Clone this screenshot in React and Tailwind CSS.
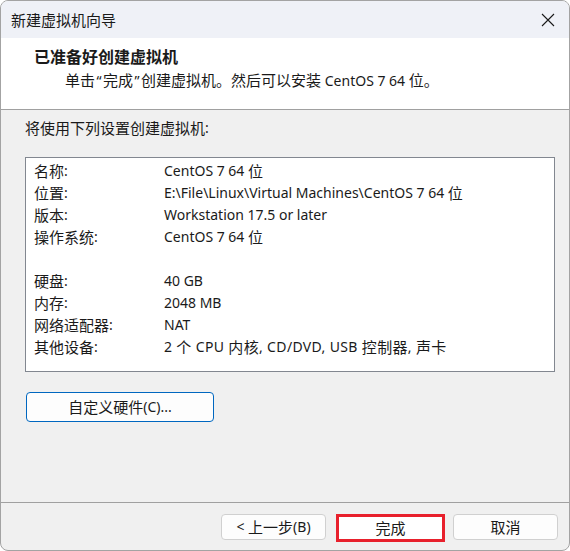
import React from "react";

// CJK runs are drawn a touch larger than the Latin text, as in the original dialog
const CJK = /([\u3000-\u303f\u4e00-\u9fff\uff00-\uffef]+|[“”])/;

const Mixed = ({ text }) => (
  <span>
    {text.split(CJK).map((part, i) => {
      if (!part) return null;
      if (part === "“" || part === "”") {
        return (
          <span key={i} className="inline-block align-top px-[1.5px]">
            {part}
          </span>
        );
      }
      if (CJK.test(part)) {
        return (
          <span key={i} className="text-[15px] align-top">
            {part}
          </span>
        );
      }
      return (
        <span key={i} className="align-top whitespace-pre">
          {part}
        </span>
      );
    })}
  </span>
);

const rows = [
  ["名称:", "CentOS 7 64 位"],
  ["位置:", "E:\\File\\Linux\\Virtual Machines\\CentOS 7 64 位"],
  ["版本:", "Workstation 17.5 or later"],
  ["操作系统:", "CentOS 7 64 位"],
  ["", ""],
  ["硬盘:", "40 GB"],
  ["内存:", "2048 MB"],
  ["网络适配器:", "NAT"],
  ["其他设备:", "2 个 CPU 内核, CD/DVD, USB 控制器, 声卡", "tracking-[0.35px]"],
];

const font = { fontFamily: '"Noto Sans", "Noto Sans CJK SC", sans-serif' };

const App = () => {
  return (
    <div
      className="w-[570px] h-[551px] flex flex-col bg-[#f0f0f0] border border-[#a3a3a3] rounded-[8px] overflow-hidden text-[14px] leading-[22px] text-[#1a1a1a]"
      style={font}
    >
      {/* title bar */}
      <div className="h-[37px] shrink-0 flex items-center justify-between bg-[#eff1f7] pl-[10px] pr-[14px]">
        <Mixed text="新建虚拟机向导" />
        <svg width="14" height="14" viewBox="0 0 14 14">
          <path d="M1 1 L13 13 M13 1 L1 13" stroke="#1a1a1a" strokeWidth="1.1" fill="none" />
        </svg>
      </div>

      {/* header */}
      <div className="h-[72px] shrink-0 bg-white border-b border-[#a0a0a0] pt-[8px] leading-[23px]">
        <div className="h-[23px] pl-[33px] font-bold text-[16px]">已准备好创建虚拟机</div>
        <div className="h-[23px] pl-[64px]">
          <Mixed text="单击“完成”创建虚拟机。然后可以安装 CentOS 7 64 位。" />
        </div>
      </div>

      {/* body */}
      <div className="flex-1 flex flex-col">
        <div className="h-[22px] mt-[7px] pl-[24px]">
          <Mixed text="将使用下列设置创建虚拟机:" />
        </div>

        <div className="ml-[24px] mt-[18px] w-[530px] h-[215px] shrink-0 bg-white border border-[#828790] pt-[2px] pl-[8px]">
          {rows.map(([label, value, extra], i) => (
            <div key={i} className="flex h-[22px] whitespace-nowrap">
              <div className="w-[130px] shrink-0">
                <Mixed text={label} />
              </div>
              <div className={extra}>
                <Mixed text={value} />
              </div>
            </div>
          ))}
        </div>

        <button className="ml-[25px] mt-[20px] w-[188px] h-[30px] bg-[#fdfdfd] border border-[#0067c0] rounded-[4px] flex items-center justify-center">
          <Mixed text="自定义硬件(C)..." />
        </button>

        <div className="mt-auto h-[48px] border-t border-[#a0a0a0] flex items-start justify-end pt-[11px] pr-[11px]">
          <button className="w-[105px] h-[26px] bg-[#fdfdfd] border border-[#d0d0d0] rounded-[4px] flex items-center justify-center">
            <Mixed text="< 上一步(B)" />
          </button>
          <button className="ml-[10px] w-[109px] h-[28px] bg-white border-[3px] border-[#e8202c] flex items-center justify-center">
            <Mixed text="完成" />
          </button>
          <button className="ml-[8px] w-[105px] h-[26px] bg-[#fdfdfd] border border-[#d0d0d0] rounded-[4px] flex items-center justify-center">
            <Mixed text="取消" />
          </button>
        </div>
      </div>
    </div>
  );
};

export default App;
